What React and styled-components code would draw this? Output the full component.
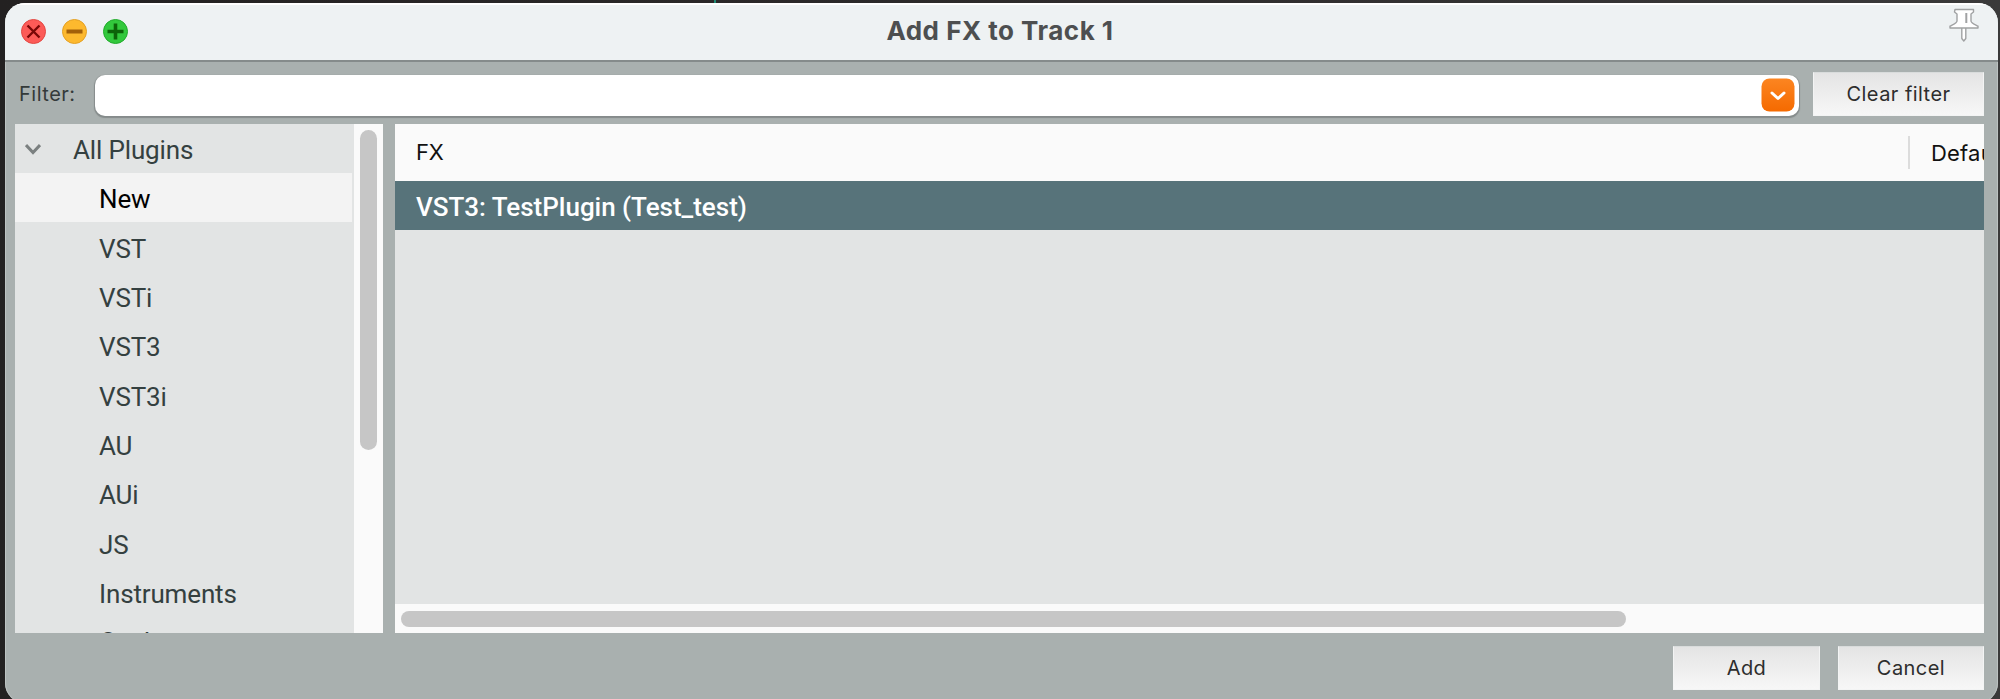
import React from 'react';
import styled, { createGlobalStyle } from 'styled-components';

const Global = createGlobalStyle`
  * { box-sizing: border-box; }
  html, body { margin: 0; padding: 0; background: #2b2929; overflow: hidden; }
`;
const Desktop = styled.div`
  width: 2000px; height: 699px; padding: 3px 2px 0 5px; overflow: hidden;
  background:
    linear-gradient(#1f8a74, #1f8a74) 714px 0 / 2px 3px no-repeat,
    linear-gradient(90deg, #232121, #2d2b2b 50%, #3a3a3a);
  font-family: Inter, "Liberation Sans", sans-serif;
`;
const Window = styled.main`
  height: 700px; display: flex; flex-direction: column; overflow: hidden;
  background: #a9b0af; border-radius: 20px;
  box-shadow: inset 1px 0 #bcc2c1, inset -1px 0 #bcc2c1;
`;
const TitleBar = styled.header`
  height: 59px; flex: none; display: grid; grid-template-columns: 1fr auto 1fr;
  align-items: center; padding: 0 19px 0 16px; background: #eef2f3;
  border-top: 2px solid #fff; border-bottom: 2px solid #858b8b;
`;
const Lights = styled.div`display: flex; gap: 16px; padding-bottom: 2px;`;
const Light = styled.svg`width: 25px; height: 25px; display: block;`;
const Title = styled.h1`
  margin: 0; padding-bottom: 3px; font-size: 26px; line-height: 30px; font-weight: 700; color: #4d4f50;
  letter-spacing: 0.5px; white-space: nowrap;
`;
const Pin = styled.svg`width: 30px; height: 35px; justify-self: end; align-self: start; margin-top: 3px;`;
const FilterBar = styled.div`
  height: 62px; flex: none; display: flex; align-items: flex-start; padding: 10px 14px 0 14px;
`;
const Label = styled.label`
  width: 76px; font-size: 20px; line-height: 24px; padding-top: 10px; color: #343a3a; letter-spacing: 0.5px;
`;
const Combo = styled.div`
  flex: 1; height: 41px; margin: 3px 14px 0 0; border-radius: 10px; background: #fff;
  box-shadow: 0 1px 1px 1px #858b8b; padding: 3px 4px; display: flex; justify-content: flex-end;
`;
const Drop = styled.svg`width: 34px; height: 34px; display: block;`;
const Button = styled.button`
  width: ${p => p.$w}px; height: 44px; border: 1px solid #f3f4f4; border-top-color: #d9dcdc; padding: 0;
  background: linear-gradient(#e4e4e4, #f7f7f7); color: #2d2d2d;
  font: 400 20px/42px Inter, sans-serif; letter-spacing: 0.45px;
`;
const Panels = styled.div`height: 509px; flex: none; display: flex; gap: 12px; padding: 0 14px 0 10px;`;
const Sidebar = styled.section`
  width: 368px; height: 100%; display: flex; overflow: hidden; background: #e2e4e4;
`;
const Tree = styled.div`flex: 1; overflow: hidden; font-family: Roboto, sans-serif;`;
const TreeRow = styled.div`
  height: ${p => (p.$root ? 49 : 49.35)}px; display: flex; align-items: center;
  margin-right: ${p => (p.$selected ? 2 : 0)}px;
  padding: 3px 0 0 ${p => (p.$root ? 10 : 84)}px; gap: 32px;
  font-size: 26px; line-height: 30px; letter-spacing: -0.15px;
  color: ${p => (p.$selected ? '#000' : '#344040')};
  background: ${p => (p.$selected ? '#f3f3f3' : 'transparent')};
  &:last-child { padding-top: 0; }
`;
const Chevron = styled.svg`width: 16px; height: 12px; margin-top: -3px;`;
const VTrack = styled.div`width: 29px; background: #fafafa; padding: 6px;`;
const VThumb = styled.div`width: 17px; height: 320px; border-radius: 9px; background: #c6c6c6;`;
const List = styled.section`
  flex: 1; min-width: 0; display: flex; flex-direction: column; background: #e2e4e4;
`;
const ListHeader = styled.div`
  height: 57px; flex: none; display: flex; align-items: center; background: #fafafa;
  color: #111; font-size: 22px; overflow: hidden; white-space: nowrap;
`;
const FxHead = styled.div`
  width: 1515px; flex: none; padding-left: 21px; border-right: 2px solid #dcdcdc;
  line-height: 33px; letter-spacing: -0.3px;
`;
const DefaultHead = styled.div`padding-left: 21px; letter-spacing: 0.2px;`;
const FxRow = styled.div`
  height: 49px; padding: 3px 0 0 21px; background: #57737a; color: #fff;
  font: 500 26px/46px Roboto, sans-serif; letter-spacing: -0.02px;
`;
const Blank = styled.div`flex: 1;`;
const HTrack = styled.div`height: 29px; background: #fafafa; padding: 7px 6px;`;
const HThumb = styled.div`width: 1225px; height: 16px; border-radius: 8px; background: #c6c6c6;`;
const Footer = styled.footer`display: flex; justify-content: flex-end; gap: 18px; padding: 13px 14px 0;`;

const items = ['New', 'VST', 'VSTi', 'VST3', 'VST3i', 'AU', 'AUi', 'JS', 'Instruments', 'Cockos'];

function TrafficLight({ fill, edge, mark, d, w = 2.4 }) {
  return (
    <Light viewBox="0 0 25 25">
      <circle cx="12.5" cy="12.5" r="12" fill={fill} stroke={edge} />
      <path d={d} fill="none" stroke={mark} strokeWidth={w} />
    </Light>
  );
}

export default function App() {
  return (
    <>
      <Global />
      <Desktop>
        <Window>
          <TitleBar>
            <Lights>
              <TrafficLight fill="#fc5b57" edge="#e24842" mark="#780806" d="M6.5 6.5l12 12M18.5 6.5l-12 12" />
              <TrafficLight fill="#fdb92e" edge="#e3a023" mark="#a36009" d="M4.5 12.5h16" w={4} />
              <TrafficLight fill="#32c83c" edge="#20ab2b" mark="#0c6409" d="M4.5 12.5h16M12.5 4.5v16" w={3.6} />
            </Lights>
            <Title>Add FX to Track 1</Title>
            <Pin viewBox="0 0 30 35" fill="#fff" stroke="#a0a2a3" strokeWidth="1.4" strokeLinejoin="round">
              <path d="M12.800 19v11.500l2 2.500 2-2.500V19z" />
              <path d="M6 1.500h18.500v2.500l-2.500 2v7c0 2 4 3.500 7 5.200v1.800H1v-1.800c3-1.700 7-3.200 7-5.200V6L5.500 4z" />
              <path d="M17.300 5v10" strokeWidth="2" />
            </Pin>
          </TitleBar>
          <FilterBar>
            <Label>Filter:</Label>
            <Combo>
              <Drop viewBox="0 0 34 34">
                <defs>
                  <linearGradient id="orange" x2="0" y2="1">
                    <stop stopColor="#fc8521" />
                    <stop offset="1" stopColor="#f56a00" />
                  </linearGradient>
                </defs>
                <rect x=".5" y=".5" width="33" height="33" rx="8" fill="url(#orange)" />
                <path d="M11 15l6 5.500 6-5.500" fill="none" stroke="#fff" strokeWidth="3" strokeLinecap="round" strokeLinejoin="round" />
              </Drop>
            </Combo>
            <Button $w={171}>Clear filter</Button>
          </FilterBar>
          <Panels>
            <Sidebar>
              <Tree>
                <TreeRow $root>
                  <Chevron viewBox="0 0 16 12"><path d="M1 2l7 7.500L15 2" fill="none" stroke="#7b8080" strokeWidth="3" /></Chevron>
                  All Plugins
                </TreeRow>
                {items.map((t, i) => <TreeRow key={t} $selected={i === 0}>{t}</TreeRow>)}
              </Tree>
              <VTrack><VThumb /></VTrack>
            </Sidebar>
            <List>
              <ListHeader>
                <FxHead>FX</FxHead>
                <DefaultHead>Default</DefaultHead>
              </ListHeader>
              <FxRow>VST3: TestPlugin (Test_test)</FxRow>
              <Blank />
              <HTrack><HThumb /></HTrack>
            </List>
          </Panels>
          <Footer>
            <Button $w={147}>Add</Button>
            <Button $w={146}>Cancel</Button>
          </Footer>
        </Window>
      </Desktop>
    </>
  );
}
